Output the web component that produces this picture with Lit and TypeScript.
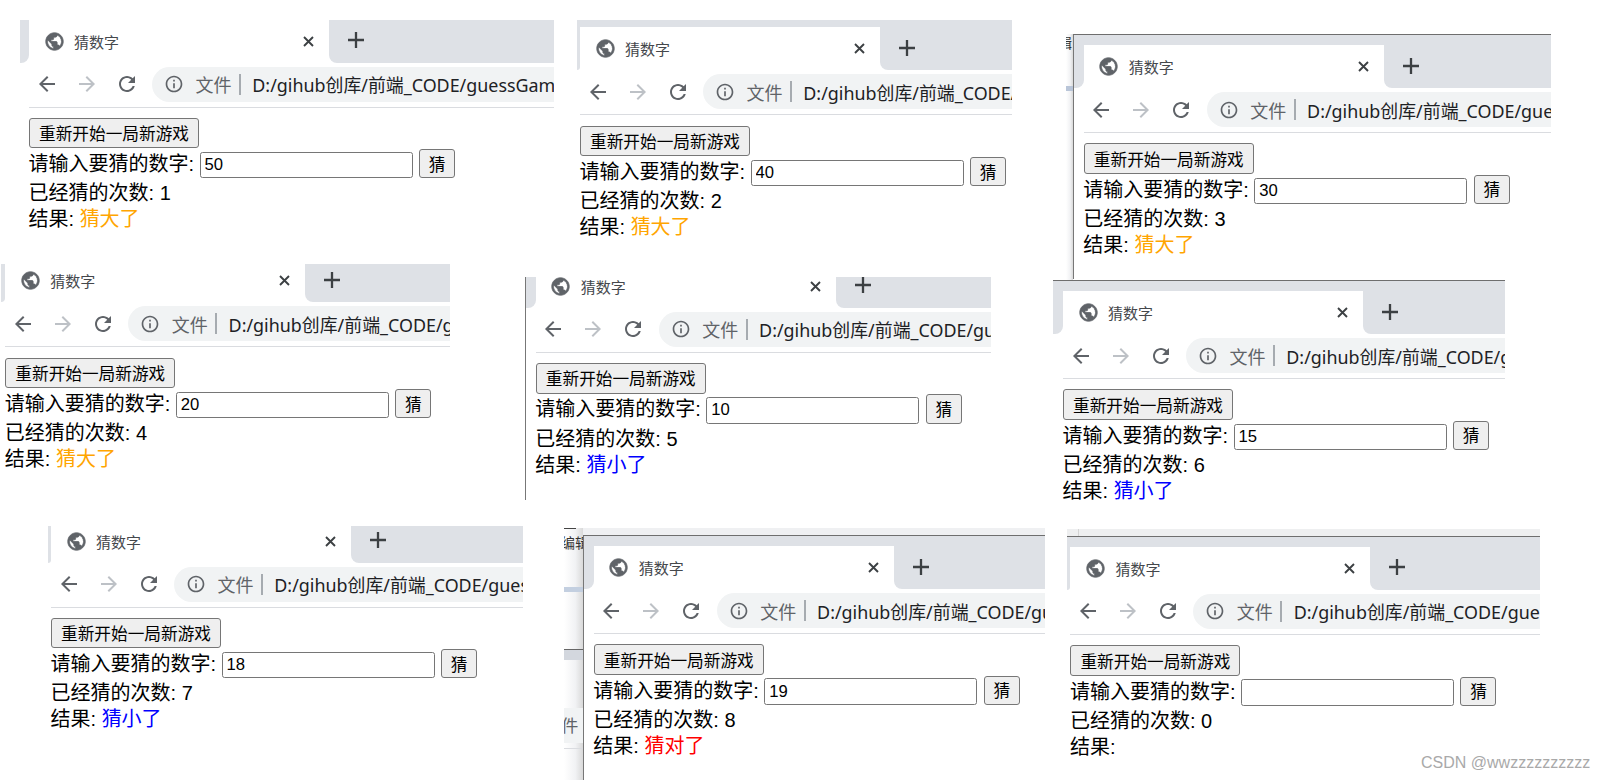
import { LitElement, html, css } from "lit";
import { customElement, property } from "lit/decorators.js";

const P_GLOBE = "M12 2C6.48 2 2 6.48 2 12s4.48 10 10 10 10-4.48 10-10S17.52 2 12 2zm-1 17.93c-3.95-.49-7-3.85-7-7.93 0-.62.08-1.21.21-1.79L9 15v1c0 1.1.9 2 2 2v1.93zm6.9-2.54c-.26-.81-1-1.39-1.9-1.39h-1v-3c0-.55-.45-1-1-1H8v-2h2c.55 0 1-.45 1-1V7h2c1.1 0 2-.9 2-2v-.41c2.93 1.19 5 4.06 5 7.41 0 2.08-.8 3.97-2.1 5.39z";
const P_BACK = "M20 11H7.83l5.59-5.59L12 4l-8 8 8 8 1.41-1.41L7.83 13H20v-2z";
const P_FWD = "M4 11h12.17l-5.59-5.59L12 4l8 8-8 8-1.41-1.41L16.17 13H4v-2z";
const P_RELOAD = "M17.65 6.35C16.2 4.9 14.21 4 12 4c-4.42 0-7.99 3.58-7.99 8s3.57 8 7.99 8c3.73 0 6.84-2.55 7.73-6h-2.08c-.82 2.33-3.04 4-5.65 4-3.31 0-6-2.69-6-6s2.69-6 6-6c1.66 0 3.14.69 4.22 1.78L13 11h7V4l-2.35 2.35z";
const P_INFO = "M11 7h2v2h-2zm0 4h2v6h-2zm1-9C6.48 2 2 6.48 2 12s4.48 10 10 10 10-4.48 10-10S17.52 2 12 2zm0 18c-4.41 0-8-3.59-8-8s3.59-8 8-8 8 3.59 8 8-3.59 8-8 8z";

interface Shot {
  x: number; y: number; w: number; h: number; ox: number; oy: number;
  val: string; n: number; res: string; cls: string; framed?: boolean; topline?: boolean;
}

const SHOTS: Shot[] = [
  { x: 20, y: 19.5, w: 534, h: 222, ox: 9, oy: 0, val: "50", n: 1, res: "猜大了", cls: "big" },
  { x: 577, y: 20, w: 434.7, h: 225, ox: 3, oy: 7.3, val: "40", n: 2, res: "猜大了", cls: "big" },
  { x: 1073, y: 34.3, w: 478, h: 245, ox: 9.8, oy: 9.9, val: "30", n: 3, res: "猜大了", cls: "big", framed: true, topline: true },
  { x: 1, y: 264, w: 449, h: 210, ox: 4.3, oy: -4.7, val: "20", n: 4, res: "猜大了", cls: "big" },
  { x: 525, y: 276.7, w: 466, h: 223.3, ox: 9.8, oy: -12.1, val: "10", n: 5, res: "猜小了", cls: "small", framed: true },
  { x: 1053, y: 280, w: 452, h: 230, ox: 10, oy: 10.2, val: "15", n: 6, res: "猜小了", cls: "small", topline: true },
  { x: 48, y: 526, w: 474.7, h: 210, ox: 3, oy: -6.5, val: "18", n: 7, res: "猜小了", cls: "small" },
  { x: 583.3, y: 535, w: 461.7, h: 245, ox: 9.5, oy: 10, val: "19", n: 8, res: "猜对了", cls: "right", framed: true, topline: true },
  { x: 1067, y: 536.3, w: 473, h: 243.7, ox: 3.4, oy: 9.7, val: "", n: 0, res: "", cls: "", topline: true },
];

const icon = (d: string, cls: string) =>
  html`<svg class=${cls} viewBox="0 0 24 24"><path d=${d}></path></svg>`;

@customElement("browser-shot")
class BrowserShot extends LitElement {
  @property({ type: Object }) shot!: Shot;

  static styles = css`
    :host { display: block; position: absolute; overflow: hidden; background: #fff; box-sizing: border-box;
      font-family: "Liberation Sans", "Noto Sans CJK SC", sans-serif; color: #000; }
    :host(.framed) { border-left: 1.5px solid #777; }
    :host(.topline) { border-top: 1.5px solid #6e6e6e; }
    .band { background: #dee1e6; }
    .strip { display: flex; height: 43px; }
    .side { background: #dee1e6; flex: none; border-bottom-right-radius: 8px; }
    .rest { background: #dee1e6; flex: 1; border-bottom-left-radius: 8px; position: relative; }
    .tab { flex: none; width: 300px; height: 43px; background: #fff; border-radius: 8px 8px 0 0; position: relative;
      display: flex; align-items: center; }
    .fav { width: 21px; height: 21px; fill: #5f6368; stroke: #5f6368; stroke-width: 0.9; margin-left: 14.5px; flex: none; }
    .title { font: 15px "Noto Sans CJK SC", sans-serif; color: #45484c; margin-left: 9.5px; flex: 1; }
    .close { position: absolute; left: 273px; top: 15px; width: 13px; height: 13px; stroke: #3c4043; stroke-width: 1.9; fill: none; }
    .plus { position: absolute; left: 19px; top: 12.5px; width: 16px; height: 16px; stroke: #3c4043; stroke-width: 2.3; fill: none; }
    .bar { display: flex; align-items: center; height: 45px; padding-bottom: 1px; border-bottom: 1px solid #dadce0; box-sizing: border-box; white-space: nowrap; }
    .nav { width: 24px; height: 24px; fill: #5f6368; flex: none; margin-right: 16px; }
    .nav.off { fill: #bdc1c6; }
    .ico-back { margin-left: 5.7px; }
    .omni { flex: none; width: 700px; height: 35px; margin-left: -2.7px; background: #f1f3f4; border-radius: 18px 0 0 18px; display: flex; align-items: center; }
    .info { width: 20px; height: 20px; fill: #5f6368; margin-left: 12px; flex: none; }
    .scheme { font: 18px "Noto Sans CJK SC", sans-serif; color: #5f6368; margin-left: 11.4px; }
    .sep { width: 2px; height: 21px; background: #a6abb0; margin: 0 11.3px 0 7.6px; flex: none; }
    .url { font: 17.9px "Noto Sans", "Noto Sans CJK SC", sans-serif; color: #202124; }
    .page { display: flex; flex-direction: column; align-items: flex-start; padding-top: 10.3px; }
    button { font: 16.67px "Liberation Sans", "Noto Sans CJK SC", sans-serif; color: #000; background: #efefef; border: 1px solid #767676; border-radius: 3px; padding: 0; box-sizing: border-box; }
    .restart { width: 170px; height: 30.7px; }
    .ask { display: flex; align-items: flex-end; height: 30px; white-space: nowrap; }
    .label { font-size: 20px; line-height: 26px; align-self: center; width: 171px; margin-left: -0.5px; margin-right: 0.5px; padding-top: 1.5px; }
    input { font: 16.67px "Liberation Sans", sans-serif; width: 213px; height: 26.5px; box-sizing: border-box; border: 1px solid #767676; border-radius: 2.5px; padding: 0 0 0 4px; margin: 0 6.6px 0 -0.5px; color: #000; background: #fff; outline: none; }
    .guess { width: 36px; height: 29.4px; }
    .lines { margin-top: 2px; margin-left: -0.5px; }
    .line { font-size: 20px; line-height: 26px; white-space: nowrap; }
    .big { color: #ffa500; }
    .small { color: #0000ff; }
    .right { color: #ff0000; }
  `;

  render() {
    const s = this.shot;
    const up = s.oy < 0 ? `margin-top:${s.oy}px` : "";
    return html`
      ${s.oy > 0 ? html`<div class="band" style="height:${s.oy}px"></div>` : ""}
      <div class="strip" style=${up}>
        <div class="side" style="width:${s.ox}px"></div>
        <div class="tab">
          ${icon(P_GLOBE, "fav")}
          <span class="title">猜数字</span>
          <svg class="close" viewBox="0 0 13 13"><path d="M2 2 11 11M11 2 2 11"></path></svg>
        </div>
        <div class="rest">
          <svg class="plus" viewBox="0 0 16 16"><path d="M8 0V16M0 8H16"></path></svg>
        </div>
      </div>
      <div style="padding-left:${s.ox}px">
        <div class="bar">
          ${icon(P_BACK, "nav ico-back")}
          ${icon(P_FWD, "nav off")}
          ${icon(P_RELOAD, "nav")}
          <div class="omni">
            ${icon(P_INFO, "info")}
            <span class="scheme">文件</span>
            <span class="sep"></span>
            <span class="url">D:/gihub创库/前端_CODE/guessGame.html</span>
          </div>
        </div>
        <div class="page">
          <button class="restart">重新开始一局新游戏</button>
          <div class="ask">
            <span class="label">请输入要猜的数字:</span>
            <input .value=${s.val} />
            <button class="guess">猜</button>
          </div>
          <div class="lines">
            <div class="line">已经猜的次数: ${s.n}</div>
            <div class="line">结果: <span class=${s.cls}>${s.res}</span></div>
          </div>
        </div>
      </div>
    `;
  }
}

@customElement("app-root")
class AppRoot extends LitElement {
  static styles = css`
    :host { display: block; position: relative; width: 1606px; height: 780px; overflow: hidden; background: #fff;
      font-family: "Liberation Sans", "Noto Sans CJK SC", sans-serif; }
    .scrap { position: absolute; overflow: hidden; background: linear-gradient(to right, #fff, #f1f2f4 60%, #d9d9d9); }
    .scrap-a { left: 1066px; top: 34px; width: 7px; height: 246px; }
    .scrap-b { left: 564px; top: 528px; width: 19.3px; height: 252px; }
    .top-b { position: absolute; left: 583px; top: 528px; width: 462px; height: 7px; background: #eff0f2; }
    .top-c { position: absolute; left: 1067px; top: 529px; width: 473px; height: 7.3px; background: #eeeff0; }
    .tick { position: absolute; left: 11px; top: 0; width: 1px; height: 100%; background: #d4d4d4; }
    .bit { position: absolute; }
    .txt { font-size: 14px; line-height: 16px; color: #333; white-space: nowrap; }
    .a1 { left: -8px; top: 1px; }
    .a2 { left: 0; top: 52px; width: 100%; height: 5px; background: #b9c5d8; }
    .b0 { left: 0; top: 0; width: 12px; height: 1px; background: #444; }
    .b1 { left: -3px; top: 7px; }
    .b2 { left: 0; top: 59px; width: 100%; height: 5px; background: #c3cfe0; }
    .b3 { left: 0; top: 121px; width: 100%; height: 11px; background: #d3d7de; border-top: 1px solid #666; box-sizing: border-box; }
    .b4 { left: 0; top: 180px; width: 100%; height: 35px; background: #f1f3f4; }
    .b5 { left: -3px; top: 185px; font-size: 17.3px; line-height: 24px; color: #5f6368; font-family: "Noto Sans CJK SC", sans-serif; }
    .b6 { left: 0; top: 220px; width: 100%; height: 1px; background: #dadce0; }
    .mark { position: absolute; left: 1421px; top: 753px; font-size: 16px; line-height: 20px; color: #a9a9a9; white-space: nowrap; }
  `;

  render() {
    return html`
      <div class="scrap scrap-a">
        <span class="bit txt a1">辑</span>
        <div class="bit a2"></div>
      </div>
      <div class="top-b"></div>
      <div class="top-c"><div class="tick"></div></div>
      <div class="scrap scrap-b">
        <div class="bit b0"></div>
        <span class="bit txt b1">编辑</span>
        <div class="bit b2"></div>
        <div class="bit b3"></div>
        <div class="bit b4"></div>
        <span class="bit b5">件</span>
        <div class="bit b6"></div>
      </div>
      ${SHOTS.map((s) => html`<browser-shot
        class="${s.framed ? "framed" : ""} ${s.topline ? "topline" : ""}"
        style="left:${s.x}px;top:${s.y}px;width:${s.w}px;height:${s.h}px"
        .shot=${s}></browser-shot>`)}
      <div class="mark">CSDN @wwzzzzzzzzzz</div>
    `;
  }
}
